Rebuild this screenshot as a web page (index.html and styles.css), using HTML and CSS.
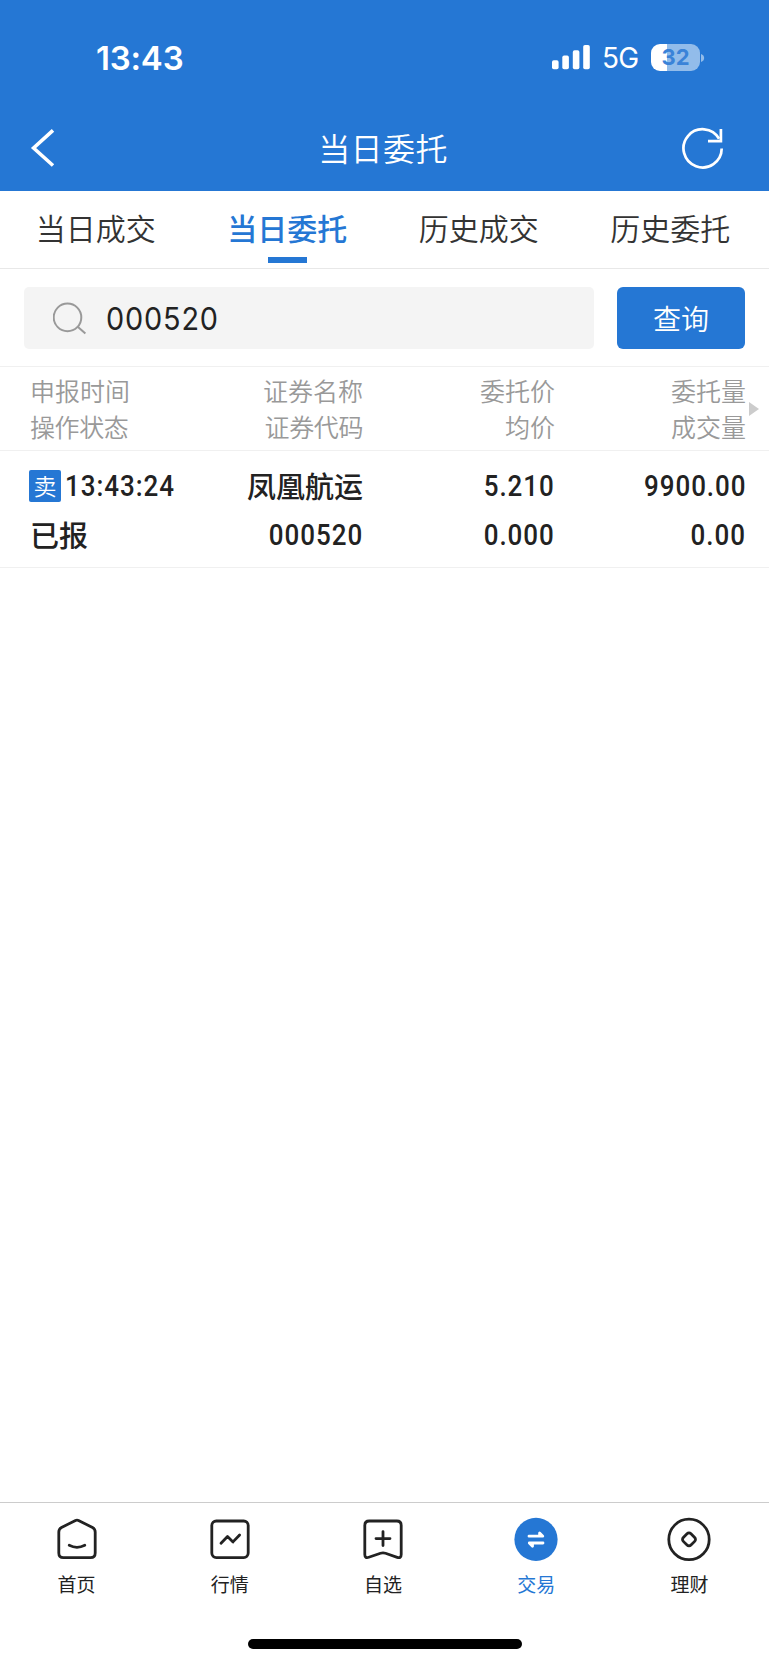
FILE: index.html
```html
<!DOCTYPE html>
<html lang="zh-CN">
<head>
<meta charset="utf-8">
<title>当日委托</title>
<link rel="stylesheet" href="styles.css">
</head>
<body>
<div class="app">
  <header class="top">
    <div class="status">
      <span class="clock">13:43</span>
      <div class="indicators">
        <svg class="signal" width="38" height="25" viewBox="0 0 38 25" fill="#fff">
          <rect x="0" y="15.3" width="6.6" height="9" rx="1.8"/>
          <rect x="10.3" y="10.6" width="6.6" height="13.7" rx="1.8"/>
          <rect x="20.8" y="5.3" width="6.6" height="19" rx="1.8"/>
          <rect x="31.2" y="0" width="6.6" height="24.3" rx="1.8"/>
        </svg>
        <span class="network">5G</span>
        <div class="battery"><span class="level">32</span></div>
        <svg class="battery-cap" width="4" height="10" viewBox="0 0 4 10"><path d="M0 1C4.2 2.2 4.2 7.8 0 9Z" fill="#92bcea"/></svg>
      </div>
    </div>
    <div class="titlebar">
      <svg class="back" width="26" height="42" viewBox="0 0 26 42" fill="none" stroke="#fff" stroke-width="3.6"><path d="M23 3.3 3.6 21 23 38.5"/></svg>
      <h1 class="title">当日委托</h1>
      <svg class="refresh" width="44" height="44" viewBox="0 0 44 44" fill="none" stroke="#fff" stroke-width="2.7"><path d="M40.7 22.5A19.1 19.1 0 1 1 38.1 12.7"/><path d="M39.9 3.1V15.1H27"/></svg>
    </div>
  </header>

  <nav class="tabs">
    <a class="tab">当日成交</a>
    <a class="tab active">当日委托</a>
    <a class="tab">历史成交</a>
    <a class="tab">历史委托</a>
  </nav>

  <section class="search">
    <div class="field">
      <svg width="34" height="33" viewBox="0 0 34 33" fill="none" stroke="#999" stroke-width="2"><circle cx="14.5" cy="15.4" r="13.8"/><path d="M24.4 24.4 32.4 31.4"/></svg>
      <span class="query">000520</span>
    </div>
    <button class="submit">查询</button>
  </section>

  <section class="grid head">
    <div class="cell"><span>申报时间</span><span class="tight">操作状态</span></div>
    <div class="cell"><span>证券名称</span><span class="tight">证券代码</span></div>
    <div class="cell"><span>委托价</span><span>均价</span></div>
    <div class="cell"><span>委托量</span><span>成交量</span></div>
    <svg class="more" width="10" height="14" viewBox="0 0 10 14"><path d="M0 0 10 7 0 14Z" fill="#ccc"/></svg>
  </section>

  <section class="grid order">
    <div class="cell"><span class="stamp"><i class="side">卖</i><span class="num">13:43:24</span></span><span>已报</span></div>
    <div class="cell"><span>凤凰航运</span><span class="num">000520</span></div>
    <div class="cell"><span class="num">5.210</span><span class="num">0.000</span></div>
    <div class="cell"><span class="num">9900.00</span><span class="num">0.00</span></div>
  </section>

  <main class="blank"></main>

  <footer class="dock">
    <nav class="dock-items">
      <a class="dock-item">
        <svg width="44" height="44" viewBox="0 0 44 44"><path d="M20.5 3.4Q22 2.7 23.5 3.4L37.5 10.5Q40.2 12 40.2 15V36Q40.2 40.6 35.6 40.6H8.4Q3.8 40.6 3.8 36V15Q3.8 12 6.5 10.5Z"/><path d="M14.2 28.3Q22 32.3 29.8 28.3"/></svg>
        <span>首页</span>
      </a>
      <a class="dock-item">
        <svg width="44" height="44" viewBox="0 0 44 44"><rect x="3.8" y="4" width="36.4" height="36.6" rx="4.5"/><path d="M13 26.2 19.5 19.5 25 24.9 31.6 18"/></svg>
        <span>行情</span>
      </a>
      <a class="dock-item">
        <svg width="44" height="44" viewBox="0 0 44 44"><path d="M8.2 4H35.8Q40.2 4 40.2 8.4V37.6Q40.2 41.6 36.2 40.3L24.5 36.3Q22 35.4 19.5 36.3L7.8 40.3Q3.8 41.6 3.8 37.6V8.4Q3.8 4 8.2 4Z"/><path d="M22 14.6V28.6M15 21.6H29"/></svg>
        <span>自选</span>
      </a>
      <a class="dock-item current">
        <svg width="44" height="44" viewBox="0 0 44 44"><circle class="disc" cx="22" cy="22.4" r="21.6"/><path class="swap" d="M15 19.2H28.8L25.6 16V18.6M29 26H15.3L18.5 29.2V26.6"/></svg>
        <span>交易</span>
      </a>
      <a class="dock-item">
        <svg width="44" height="44" viewBox="0 0 44 44"><circle cx="22" cy="22.4" r="20.2"/><rect x="16.6" y="17" width="10.8" height="10.8" rx="2.8" transform="rotate(45 22 22.4)"/></svg>
        <span>理财</span>
      </a>
    </nav>
    <div class="home-bar"></div>
  </footer>
</div>
</body>
</html>
```
FILE: styles.css
```css
* { box-sizing: border-box; }
body {
  margin: 0;
  background: #fff;
  color: #222;
  font-family: "Noto Sans CJK SC", sans-serif;
}
.app { width: 769px; height: 1665px; display: flex; flex-direction: column; overflow: hidden; }

.top { height: 191px; background: #2577d4; color: #fff; flex: none; }
.status {
  height: 104px; padding: 11px 64px 0 96px;
  display: flex; align-items: center; justify-content: space-between;
  font-family: Inter, sans-serif;
}
.clock { font-size: 33px; font-weight: 600; letter-spacing: -0.2px; }
.indicators { display: flex; align-items: center; }
.network { margin-left: 12px; width: 49px; font-size: 28px; font-weight: 400; letter-spacing: -0.8px; white-space: nowrap; }
.battery {
  width: 49px; height: 27px; border-radius: 9px;
  background: linear-gradient(90deg, #fff 0 16px, #92bcea 16px);
  display: flex; align-items: center; justify-content: center;
}
.level { color: #3a83d8; font-size: 22px; font-weight: 700; line-height: 27px; }
.battery-cap { margin-left: 1px; }
.titlebar {
  height: 87px; padding: 0 44px 0 30px;
  display: grid; grid-template-columns: 55px 1fr 44px; align-items: center;
}
.title { margin: 0 0 1px; text-align: center; font-size: 32px; font-weight: 350; line-height: 48px; letter-spacing: 0.4px; }

.tabs { height: 78px; padding-right: 3px; display: grid; grid-template-columns: repeat(4, 1fr); border-bottom: 1px solid #e8e8e8; flex: none; }
.tab {
  display: flex; flex-direction: column; align-items: center;
  padding-top: 13px; font-size: 30px; line-height: 46px; font-weight: 350; color: #333;
}
.tab.active { color: #2577d4; font-weight: 500; }
.tab.active::after { content: ""; width: 39px; height: 6px; margin-top: 7px; background: #2577d4; }

.search { height: 98px; padding: 18px 24px 0; display: flex; gap: 23px; border-bottom: 1px solid #f0f0f0; flex: none; }
.field { flex: 1; height: 62px; border-radius: 5px; background: #f4f4f4; display: flex; align-items: center; padding-left: 29px; }
.query { margin-left: 19px; font-family: Inter, sans-serif; font-size: 31px; letter-spacing: 0.9px; transform: scaleX(0.93); transform-origin: left; }
.submit {
  width: 128px; height: 62px; border: 0; padding: 0; border-radius: 6px;
  background: #2577d4; color: #fff; font: 350 28px/40px "Noto Sans CJK SC", sans-serif;
}

.grid { display: grid; grid-template-columns: 172px 191px 192px 191px; position: relative; border-bottom: 1px solid #f0f0f0; flex: none; }
.cell { display: flex; flex-direction: column; align-items: flex-end; }
.cell:first-child { align-items: flex-start; padding-left: 30px; }
.head { height: 84px; padding-top: 5px; font-size: 25px; line-height: 36px; font-weight: 350; color: #999; }
.tight { letter-spacing: -0.4px; }
.more { position: absolute; left: 749px; top: 35px; }
.order { height: 117px; padding-top: 10px; font-size: 29px; line-height: 49px; font-weight: 500; }
.cell > span { height: 49px; white-space: nowrap; }
.head .cell > span { height: 36px; }
.num {
  font-family: Roboto, sans-serif; font-size: 29.5px; line-height: 50px; letter-spacing: 1.1px;
  transform: scaleX(0.88); transform-origin: right;
}
.stamp { display: flex; align-items: center; margin-left: -1px; }
.stamp .num { transform-origin: left; line-height: 52px; }
.side {
  width: 32px; height: 32px; margin-right: 4px; border-radius: 2px;
  background: #2577d4; color: #fff; font: 350 23px/30px "Noto Sans CJK SC", sans-serif; text-align: center;
}

.blank { flex: 1; }

.dock { height: 163px; border-top: 1px solid #ccc; display: flex; flex-direction: column; align-items: center; flex: none; }
.dock-items { width: 100%; padding-right: 3px; display: grid; grid-template-columns: repeat(5, 1fr); }
.dock-item { display: flex; flex-direction: column; align-items: center; padding-top: 14px; font-size: 19px; line-height: 28px; }
.dock-item span { margin-top: 9px; }
.dock-item svg { fill: none; stroke: #222; stroke-width: 2.8; stroke-linecap: round; stroke-linejoin: round; }
.dock-item.current { color: #2577d4; }
.dock-item .disc { fill: #2577d4; stroke: none; }
.dock-item .swap { stroke: #fff; stroke-width: 2.8; }
.home-bar { width: 274px; height: 10px; margin-top: 41px; border-radius: 5px; background: #000; }
```
